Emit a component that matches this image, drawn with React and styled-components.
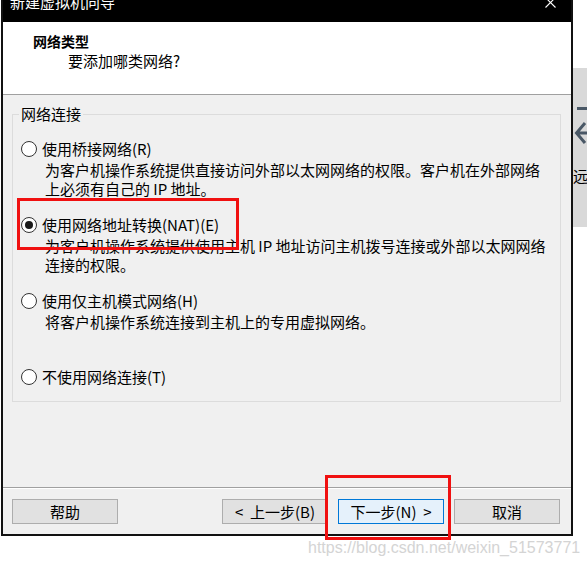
import React from "react";
import styled, { createGlobalStyle, css } from "styled-components";

const cjk = `"Noto Sans CJK SC", "Microsoft YaHei", sans-serif`;

const Global = createGlobalStyle`
  html, body { margin: 0; padding: 0; background: #fff; }
  body { font-family: ${cjk}; }
  * { box-sizing: border-box; }
`;

const Page = styled.div`
  position: relative;
  width: 587px;
  height: 567px;
  overflow: hidden;
  background: #fff;
  font-family: ${cjk};
  color: #000;
`;

const Desktop = styled.div`
  display: flex;
  align-items: flex-start;
`;

const Dialog = styled.div`
  margin-left: 1px;
  width: 572px;
  height: 536px;
  flex: none;
  display: flex;
  flex-direction: column;
  background: #f0f0f0;
  border: 2px solid #111;
  border-top: 0;
`;

const TitleBar = styled.div`
  height: 22px;
  flex: none;
  background: #000;
  color: #fff;
  display: flex;
  justify-content: space-between;
  align-items: flex-start;
  padding: 0 15px 0 7px;
  overflow: hidden;
`;

const TitleText = styled.div`
  margin-top: -6px;
  font-size: 15px;
  line-height: 15px;
`;

const CloseIcon = styled.svg`
  margin-top: -3px;
  display: block;
`;

const Header = styled.div`
  height: 73px;
  flex: none;
  background: #fff;
  border-bottom: 1px solid #a0a0a0;
  padding: 10px 0 0 30px;
`;

const HeaderTitle = styled.div`
  font-size: 14px;
  font-weight: 700;
  line-height: 18px;
`;

const HeaderSubtitle = styled.div`
  margin: 2px 0 0 35px;
  font-size: 15px;
  line-height: 18px;
`;

const Body = styled.div`
  flex: 1;
  padding: 10px 10px 0 9px;
`;

const Group = styled.fieldset`
  margin: 0;
  padding: 16px 0 14px 0;
  border: 1px solid #dcdcdc;
  min-width: 0;
`;

const Legend = styled.legend`
  margin-left: 6px;
  padding: 0 2px;
  font-size: 15px;
  line-height: 18px;
`;

const OptionList = styled.div`
  display: grid;
  grid-template-rows: 76px 76px 76px auto;
  padding-left: 8px;
`;

const Option = styled.label`
  display: grid;
  grid-template-columns: 16px 1fr;
  column-gap: 5px;
  align-content: start;
  font-size: 15px;
`;

const Radio = styled.span`
  width: 16px;
  height: 16px;
  align-self: center;
  border-radius: 50%;
  border: 1px solid #333;
  background: #fff;
  display: flex;
  align-items: center;
  justify-content: center;
  ${(p) =>
    p.$checked &&
    css`
      &::after {
        content: "";
        width: 8px;
        height: 8px;
        border-radius: 50%;
        background: #1a1a1a;
      }
    `}
`;

const OptionLabel = styled.span`
  line-height: 20px;
  white-space: nowrap;
`;

const OptionDesc = styled.div`
  grid-column: 2;
  margin: 2px 0 0 3px;
  line-height: 17px;
  white-space: nowrap;
`;

const Footer = styled.div`
  flex: none;
  border-top: 1px solid #a0a0a0;
  box-shadow: inset 0 1px 0 #fff;
  padding: 11px 11px 10px 9px;
  display: flex;
  justify-content: space-between;
`;

const ButtonGroup = styled.div`
  display: flex;
  gap: 10px;
`;

const Button = styled.button`
  width: 106px;
  height: 25px;
  padding: 0;
  margin: 0;
  font-family: ${cjk};
  font-size: 15px;
  line-height: 23px;
  color: #000;
  white-space: pre;
  background: ${(p) => (p.$primary ? "#e5f1fb" : "#e1e1e1")};
  border: 1px solid ${(p) => (p.$primary ? "#0078d7" : "#adadad")};
  border-radius: 0;
`;

const SidePanel = styled.div`
  flex: 1;
  margin-top: 68px;
  height: 159px;
  background: #d9d9d9;
  padding-top: 38px;
  overflow: hidden;
`;

const SideIcon = styled.svg`
  display: block;
`;

const SideText = styled.div`
  margin-top: 17px;
  font-size: 15px;
  line-height: 18px;
  white-space: nowrap;
`;

const Annotation = styled.div`
  position: absolute;
  left: ${(p) => p.$x}px;
  top: ${(p) => p.$y}px;
  width: ${(p) => p.$w}px;
  height: ${(p) => p.$h}px;
  border: 3px solid #f01010;
  pointer-events: none;
`;

const Watermark = styled.div`
  position: absolute;
  left: 308px;
  top: 539px;
  font-family: "Liberation Sans", Arial, sans-serif;
  font-size: 16px;
  line-height: 18px;
  color: #d4d4d4;
  white-space: nowrap;
`;

const options = [
  {
    label: "使用桥接网络(R)",
    desc: ["为客户机操作系统提供直接访问外部以太网网络的权限。客户机在外部网络", "上必须有自己的 IP 地址。"],
  },
  {
    label: "使用网络地址转换(NAT)(E)",
    checked: true,
    desc: ["为客户机操作系统提供使用主机 IP 地址访问主机拨号连接或外部以太网网络", "连接的权限。"],
  },
  {
    label: "使用仅主机模式网络(H)",
    desc: ["将客户机操作系统连接到主机上的专用虚拟网络。"],
  },
  { label: "不使用网络连接(T)", desc: [] },
];

export default function App() {
  return (
    <Page>
      <Global />
      <Desktop>
        <Dialog>
          <TitleBar>
            <TitleText>新建虚拟机向导</TitleText>
            <CloseIcon width="11" height="11" viewBox="0 0 11 11">
              <path d="M0.5 0.5 L10.5 10.5 M10.5 0.5 L0.5 10.5" stroke="#fff" strokeWidth="1.1" fill="none" />
            </CloseIcon>
          </TitleBar>
          <Header>
            <HeaderTitle>网络类型</HeaderTitle>
            <HeaderSubtitle>要添加哪类网络?</HeaderSubtitle>
          </Header>
          <Body>
            <Group>
              <Legend>网络连接</Legend>
              <OptionList>
                {options.map((o) => (
                  <Option key={o.label}>
                    <Radio $checked={o.checked} />
                    <OptionLabel>{o.label}</OptionLabel>
                    {o.desc.map((d) => (
                      <OptionDesc key={d}>{d}</OptionDesc>
                    ))}
                  </Option>
                ))}
              </OptionList>
            </Group>
          </Body>
          <Footer>
            <Button>帮助</Button>
            <ButtonGroup>
              <Button>{"<  上一步(B)"}</Button>
              <Button $primary>{"下一步(N)  >"}</Button>
              <Button>取消</Button>
            </ButtonGroup>
          </Footer>
        </Dialog>
        <SidePanel>
          <SideIcon width="14" height="44" viewBox="0 0 14 44">
            <rect x="4" y="1" width="10" height="3" fill="#4a5866" />
            <path d="M12 17 L3.5 27 L12 37 M3.5 27 H14" stroke="#4a5866" strokeWidth="3" fill="none" />
          </SideIcon>
          <SideText>远</SideText>
        </SidePanel>
      </Desktop>
      <Annotation $x={17} $y={198} $w={222} $h={52} />
      <Annotation $x={325} $y={475} $w={126} $h={65} />
      <Watermark>https://blog.csdn.net/weixin_51573771</Watermark>
    </Page>
  );
}
